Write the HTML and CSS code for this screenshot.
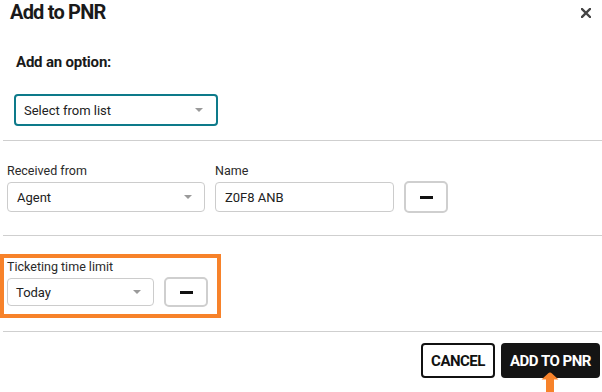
FILE: index.html
```html
<!DOCTYPE html>
<html lang="en">
<head>
    <meta charset="UTF-8">
    <meta name="viewport" content="width=device-width, initial-scale=1.0">
    <title>Add to PNR</title>
    <link rel="stylesheet" href="styles.css">
</head>
<body>
    <div class="dialog">
        <header class="dialog-head">
            <h1>Add to PNR</h1>
            <button class="btn-close" aria-label="Close">
                <svg width="10" height="10" viewBox="0 0 10 10">
                    <path d="M1 1 L9 9 M9 1 L1 9" stroke="#444" stroke-width="2.4" stroke-linecap="square"/>
                </svg>
            </button>
        </header>

        <section class="option">
            <h2>Add an option:</h2>
            <div class="select select-focus">
                <span>Select from list</span>
                <i class="caret"></i>
            </div>
        </section>

        <hr class="divider">

        <section class="fields">
            <div class="field">
                <label>Received from</label>
                <div class="select select-received">
                    <span>Agent</span>
                    <i class="caret"></i>
                </div>
            </div>
            <div class="field">
                <label>Name</label>
                <div class="input input-name">Z0F8 ANB</div>
            </div>
            <button class="btn-minus" aria-label="Remove"><span></span></button>
        </section>

        <hr class="divider divider-mid">

        <section class="fields highlight">
            <div class="field">
                <label>Ticketing time limit</label>
                <div class="select select-ttl">
                    <span>Today</span>
                    <i class="caret"></i>
                </div>
            </div>
            <button class="btn-minus btn-minus-sm" aria-label="Remove"><span></span></button>
        </section>

        <hr class="divider divider-foot">

        <footer class="actions">
            <button class="btn btn-outline">CANCEL</button>
            <button class="btn btn-dark">ADD TO PNR</button>
        </footer>

        <!-- pointer arrow over the submit button -->
        <svg class="pointer" width="18" height="20" viewBox="0 0 18 20">
            <path d="M9 0.5 Q10 0.5 11 1.5 L17.5 7.5 L13 7.5 L13 20 L5 20 L5 7.5 L0.5 7.5 L7 1.5 Q8 0.5 9 0.5 Z" fill="#f7822a"/>
        </svg>
    </div>
</body>
</html>
```

FILE: styles.css
```css
* {
    margin: 0;
    padding: 0;
    box-sizing: border-box;
    font-family: Roboto, 'Liberation Sans', Arial, sans-serif;
}

body {
    background-color: #fff;
    color: #222;
}

.dialog {
    position: relative;
    width: 602px;
    height: 392px;
    overflow: hidden;
}

.dialog-head {
    display: flex;
    justify-content: space-between;
    align-items: flex-start;
    padding: 0 11px 0 10px;
    height: 24px;
}

h1 {
    font-size: 20px;
    line-height: 24px;
    font-weight: 700;
    letter-spacing: -0.8px;
    color: #1a1a1a;
}

.btn-close {
    border: none;
    background: none;
    margin-top: 8px;
    width: 10px;
    height: 10px;
    display: flex;
}

.option {
    padding: 28px 0 0 14px;
}

h2 {
    font-size: 15px;
    line-height: 20px;
    font-weight: 700;
    letter-spacing: -0.2px;
    margin-left: 2px;
    color: #1a1a1a;
}

.select,
.input {
    display: flex;
    align-items: center;
    justify-content: space-between;
    border: 1px solid #ccc;
    border-radius: 4px;
    font-size: 13px;
    color: #222;
    background: #fff;
}

.select-focus {
    margin-top: 22px;
    width: 204px;
    height: 32px;
    border: 2px solid #0d7a8a;
    padding: 0 13px 0 8px;
}

.caret {
    width: 0;
    height: 0;
    border-left: 4px solid transparent;
    border-right: 4px solid transparent;
    border-top: 4px solid #9a9a9a;
}

.divider {
    border: none;
    border-top: 1px solid #cfcfcf;
    margin: 14px 0 0 3px;
}

.divider-mid {
    margin-top: 23px;
}

.divider-foot {
    margin-top: 13px;
}

.fields {
    display: flex;
    align-items: flex-end;
    gap: 10px;
    padding: 22px 0 0 7px;
}

.field label {
    display: block;
    font-size: 12.5px;
    line-height: 16px;
    color: #2a2a2a;
    margin-bottom: 3px;
}

.select-received {
    width: 198px;
    height: 30px;
    padding: 0 12px 0 9px;
}

.input-name {
    width: 179px;
    height: 30px;
    padding: 0 9px;
}

.btn-minus {
    width: 44px;
    height: 32px;
    border: 2px solid #cfcfcf;
    border-radius: 5px;
    background: #fff;
    display: flex;
    align-items: center;
    justify-content: center;
    margin-bottom: -1px;
}

.btn-minus span {
    display: block;
    width: 13px;
    height: 3px;
    background: #111;
}

.highlight {
    width: 221px;
    margin-top: 18px;
    border: 4px solid #f7822a;
    padding: 1px 0 8px 3px;
}

.select-ttl {
    width: 147px;
    height: 28px;
    padding: 0 12px 0 8px;
}

.btn-minus-sm {
    height: 30px;
}

.actions {
    display: flex;
    justify-content: flex-end;
    gap: 6px;
    padding: 11px 2px 0 0;
}

.btn {
    height: 35px;
    border-radius: 4px;
    font-size: 15px;
    font-weight: 700;
    letter-spacing: -0.5px;
    padding: 0;
}

.btn-outline {
    width: 74px;
    border: 2px solid #111;
    background: #fff;
    color: #111;
}

.btn-dark {
    width: 99px;
    border: none;
    background: #141414;
    color: #fff;
}

.pointer {
    position: absolute;
    left: 541px;
    top: 372px;
}
```
